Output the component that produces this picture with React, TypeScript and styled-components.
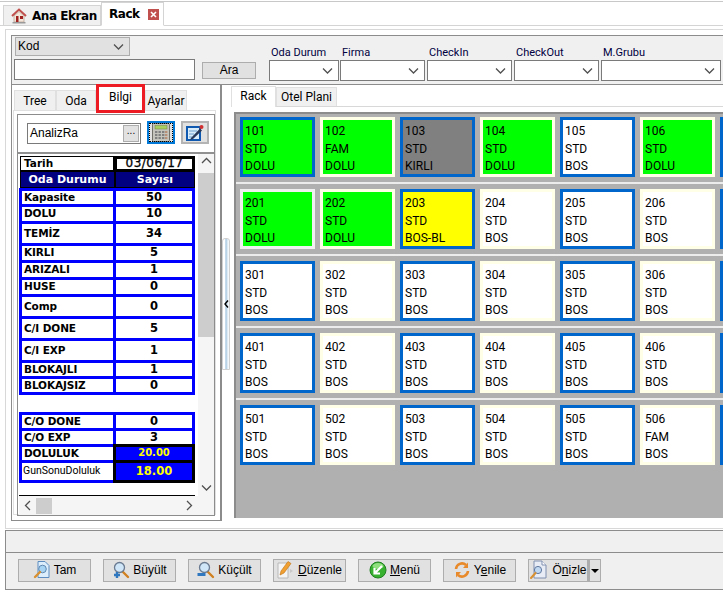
import React from "react"
import styled, { createGlobalStyle } from "styled-components"

const GlobalStyle = createGlobalStyle`
  html, body {
    margin: 0;
    padding: 0;
    width: 723px;
    height: 594px;
    overflow: hidden;
    background: #ffffff;
    font-family: "Liberation Sans", Arial, sans-serif;
    color: #000000;
  }
  * { box-sizing: border-box; }
`

const Page = styled.div`
  width: 723px;
  height: 594px;
  overflow: hidden;
  display: flex;
  flex-direction: column;
  padding-top: 1px;
`

const TopTabs = styled.div`
  height: 25px;
  flex: none;
  display: flex;
  align-items: flex-end;
  padding-left: 3px;
  border-top: 1px solid #c8c8c8;
  border-bottom: 1px solid #d4d4d4;
`

const TopTab = styled.div<{ $active?: boolean }>`
  height: ${(p) => (p.$active ? "24px" : "20px")};
  width: ${(p) => (p.$active ? "63px" : "98px")};
  display: flex;
  align-items: center;
  gap: 5px;
  padding-left: 7px;
  background: ${(p) => (p.$active ? "#ffffff" : "#f0f0f0")};
  border: 1px solid #d4d4d4;
  border-bottom: ${(p) => (p.$active ? "1px solid #ffffff" : "none")};
  margin-bottom: ${(p) => (p.$active ? "-1px" : "0")};
  font-family: "DejaVu Sans", sans-serif;
  font-weight: 700;
  font-size: 12px;
  letter-spacing: -0.45px;
`

const CloseBox = styled.span`
  width: 11px;
  height: 11px;
  background: #c0504d;
  margin-left: 3px;
  display: flex;
  align-items: center;
  justify-content: center;
`

const Workspace = styled.div`
  flex: none;
  margin: 3px 0 0 5px;
  height: 500px;
  border-top: 1px solid #d8d8d8;
  border-left: 1px solid #d8d8d8;
  border-bottom: 1px solid #d8d8d8;
  padding: 5px 0 0 5px;
  display: flex;
  flex-direction: column;
`

const SearchBar = styled.div`
  height: 50px;
  flex: none;
  background: #f0f0f0;
  border: 1px solid #8c8c8c;
  border-right: none;
  display: flex;
  padding: 1px 0 0 1px;
`

const SearchLeft = styled.div`
  width: 188px;
  flex: none;
  display: flex;
  flex-direction: column;
  gap: 3px;
`

const KodSelect = styled.div`
  width: 115px;
  height: 19px;
  margin-left: 2px;
  background: #e1e1e1;
  border: 1px solid #adadad;
  font-size: 12px;
  line-height: 17px;
  padding-left: 2px;
  display: flex;
  justify-content: space-between;
  align-items: center;
  padding-right: 5px;
`

const TextInput = styled.div`
  width: 181px;
  height: 21px;
  margin-left: 1px;
  background: #ffffff;
  border: 1px solid #7a7a7a;
`

const AraButton = styled.div`
  width: 54px;
  height: 17px;
  flex: none;
  margin: 25px 0 0 1px;
  background: #e1e1e1;
  border: 1px solid #adadad;
  font-size: 12px;
  line-height: 15px;
  text-align: center;
`

const Filters = styled.div`
  display: flex;
  flex: none;
  gap: 1px;
  margin-left: 13px;
  padding-top: 9px;
`

const Filter = styled.div<{ $w: number }>`
  width: ${(p) => p.$w}px;
  flex: none;
  margin-right: ${(p) => (p.$w === 85 ? 1 : 0)}px;
`

const FilterLabel = styled.div`
  height: 14px;
  font-family: Roboto, sans-serif;
  font-size: 11px;
  line-height: 14px;
  color: #000040;
  padding-left: 2px;
  white-space: nowrap;
`

const FilterBox = styled.div`
  height: 21px;
  background: #ffffff;
  border: 1px solid #7a7a7a;
  display: flex;
  justify-content: flex-end;
  align-items: center;
  padding-right: 5px;
`

const Body = styled.div`
  flex: 1;
  min-height: 0;
  display: flex;
`

const LeftPane = styled.div`
  width: 211px;
  flex: none;
  border: 1px solid #8c8c8c;
  border-top: none;
  border-right-width: 2px;
  height: 436px;
  padding: 4px 4px 5px 1px;
  display: flex;
  flex-direction: column;
`

const TabRow = styled.div`
  height: 21px;
  flex: none;
  display: flex;
  align-items: flex-end;
  padding-left: 1px;
`

const SmallTab = styled.div<{ $w: number }>`
  width: ${(p) => p.$w}px;
  height: 20px;
  background: #f0f0f0;
  border: 1px solid #e0e0e0;
  border-bottom: none;
  font-family: Roboto, sans-serif;
  font-size: 12px;
  line-height: 20px;
  text-align: center;
  white-space: nowrap;
`

const ActiveTab = styled.div`
  width: 49px;
  height: 29px;
  margin-bottom: -3px;
  background: #ffffff;
  border: 3px solid #ed1c24;
  font-family: Roboto, sans-serif;
  font-size: 12px;
  line-height: 20px;
  text-align: center;
  position: relative;
  z-index: 1;
`

const LeftContent = styled.div`
  flex: 1;
  min-height: 0;
  border: 1px solid #e0e0e0;
  padding: 3px 0 0 3px;
  display: flex;
`

const LeftInner = styled.div`
  width: 200px;
  height: 402px;
  border: 1px solid #8c8c8c;
  display: flex;
  flex-direction: column;
`

const ToolRow = styled.div`
  height: 39px;
  flex: none;
  border-bottom: 2px solid #909090;
  display: flex;
  align-items: flex-start;
  padding: 6px 0 0 9px;
`

const AnalizBox = styled.div`
  width: 114px;
  height: 21px;
  margin-top: 2px;
  background: #ffffff;
  border: 1px solid #7a7a7a;
  font-size: 12px;
  line-height: 19px;
  padding-left: 2px;
  display: flex;
  justify-content: space-between;
`

const DotsButton = styled.span`
  width: 16px;
  height: 17px;
  margin: 1px;
  background: #e1e1e1;
  border: 1px solid #adadad;
  font-size: 10px;
  line-height: 10px;
  text-align: center;
`

const IconButton = styled.div<{ $focus?: boolean }>`
  width: 28px;
  height: 23px;
  margin-left: 6px;
  background: #e1e1e1;
  border: ${(p) => (p.$focus ? "2px solid #0078d7" : "2px solid #b4b4b4")};
  outline: ${(p) => (p.$focus ? "1px dotted #000000" : "none")};
  outline-offset: -3px;
  display: flex;
  align-items: center;
  justify-content: center;
`

const ScrollArea = styled.div`
  flex: 1;
  min-height: 0;
  display: grid;
  grid-template-columns: 179px 16px;
  grid-template-rows: 342px 1fr;
  padding-left: 1px;
`

const Sheet = styled.div`
  overflow: hidden;
  padding-top: 2px;
`

const HeadRow = styled.div`
  display: flex;
  height: 15px;
`

const TarihLabel = styled.div`
  width: 94px;
  margin-left: 1px;
  border: 1px solid #000000;
  font-family: "DejaVu Sans", sans-serif;
  font-weight: 700;
  font-size: 10.5px;
  line-height: 13px;
  padding-left: 3px;
`

const TarihValue = styled.div`
  width: 81px;
  background: #ffffff;
  border: 3px solid #000000;
  border-bottom-width: 2px;
  font-family: "DejaVu Sans", sans-serif;
  -webkit-text-stroke: 0.3px #000000;
  font-size: 12px;
  letter-spacing: 0.5px;
  line-height: 9px;
  text-align: center;
  white-space: nowrap;
`

const TitleRow = styled.div`
  display: flex;
  height: 17px;
  background: #000080;
  color: #ffffff;
  font-family: "DejaVu Sans", sans-serif;
  font-weight: 700;
  font-size: 11px;
  line-height: 15px;
  margin-left: 1px;
  width: 175px;
  border: 1px solid #000000;
`

const TitleCell = styled.div<{ $w: number }>`
  width: ${(p) => p.$w}px;
  text-align: center;
  & + & {
    border-left: 2px solid #000000;
  }
`

const StatRow = styled.div<{ $h: number; $last?: boolean }>`
  height: ${(p) => p.$h}px;
  width: 176px;
  display: flex;
  border: 3px solid #0000ff;
  border-bottom: ${(p) => (p.$last ? "3px solid #0000ff" : "none")};
  background: #ffffff;
  font-family: "DejaVu Sans", sans-serif;
  font-weight: 700;
  font-size: 10.5px;
`

const StatLabel = styled.div`
  width: 91px;
  flex: none;
  padding: 0 0 2px 2px;
  display: flex;
  align-items: center;
  white-space: nowrap;
  letter-spacing: -0.1px;
`

const StatValue = styled.div`
  flex: 1;
  border-left: 3px solid #0000ff;
  padding-bottom: 2px;
  display: flex;
  align-items: center;
  justify-content: center;
  font-size: 11.5px;
`

const HotRow = styled.div<{ $h: number }>`
  height: ${(p) => p.$h}px;
  width: 176px;
  display: flex;
  font-family: "DejaVu Sans", sans-serif;
  font-weight: 700;
  font-size: 10.5px;
`

const HotLabel = styled.div<{ $plain?: boolean }>`
  width: 94px;
  flex: none;
  background: #ffffff;
  border-left: 3px solid #0000ff;
  border-top: 3px solid #0000ff;
  border-bottom: ${(p) => (p.$plain ? "3px solid #0000ff" : "none")};
  padding: 0 0 2px ${(p) => (p.$plain ? 1 : 2)}px;
  display: flex;
  align-items: center;
  white-space: nowrap;
  letter-spacing: -0.1px;
  ${(p) =>
    p.$plain &&
    `
    font-family: Roboto, sans-serif;
    font-weight: 400;
    font-size: 10.5px;
    letter-spacing: 0;
  `}
`

const HotValue = styled.div<{ $size: number; $last?: boolean }>`
  flex: 1;
  background: #0000ff;
  color: #ffff00;
  font-size: ${(p) => p.$size}px;
  border: 3px solid #000000;
  border-bottom: ${(p) => (p.$last ? "3px solid #000000" : "none")};
  padding-bottom: 2px;
  display: flex;
  align-items: center;
  justify-content: center;
`

const Gap = styled.div<{ $h: number }>`
  height: ${(p) => p.$h}px;
`

const BlackRule = styled.div`
  height: 2px;
  width: 176px;
  background: #000000;
  margin-top: 12px;
`

const VScroll = styled.div`
  background: #f5f5f5;
  display: flex;
  flex-direction: column;
  align-items: center;
  justify-content: space-between;
  padding: 3px 0 4px;
  position: relative;
`

const VThumb = styled.div`
  position: absolute;
  left: 0;
  right: 0;
  top: 19px;
  height: 164px;
  background: #cdcdcd;
`

const HScroll = styled.div`
  grid-column: 1 / span 2;
  display: flex;
  align-items: center;
  justify-content: space-between;
  padding: 0 21px 0 5px;
  background: #f5f5f5;
`

const HThumb = styled.div`
  width: 16px;
  height: 16px;
  margin-left: 4px;
  margin-right: auto;
  background: #cdcdcd;
`

const Splitter = styled.div`
  width: 9px;
  flex: none;
  padding-top: 153px;
`

const SplitHandle = styled.div`
  width: 8px;
  height: 132px;
  border: 1px solid #d0d0d0;
  border-radius: 3px 3px 0 0;
  background: linear-gradient(90deg, #ffffff 0 25%, #a8c8e0 50%, #ddeaf4 75%, #ffffff 100%);
  display: flex;
  align-items: center;
  justify-content: center;
`

const RightPane = styled.div`
  flex: 1;
  min-width: 0;
  height: 433px;
  display: flex;
  flex-direction: column;
  overflow: hidden;
`

const RightTabs = styled.div`
  height: 22px;
  flex: none;
  display: flex;
  align-items: flex-end;
  border-bottom: 1px solid #d8d8d8;
`

const RightTab = styled.div<{ $active?: boolean }>`
  width: ${(p) => (p.$active ? 45 : 61)}px;
  height: ${(p) => (p.$active ? 21 : 19)}px;
  margin-bottom: ${(p) => (p.$active ? -1 : 0)}px;
  background: ${(p) => (p.$active ? "#ffffff" : "#f0f0f0")};
  border: 1px solid #e0e0e0;
  border-bottom: none;
  font-family: Roboto, sans-serif;
  font-size: 12px;
  line-height: 18px;
  text-align: center;
  white-space: nowrap;
`

const RackArea = styled.div`
  flex: none;
  height: 406px;
  margin: 5px 0 0 3px;
  background: #b0b0b0;
  border-top: 2px solid #8c8c8c;
  border-left: 2px solid #8c8c8c;
  overflow: hidden;
  width: 600px;
`

const RackRow = styled.div`
  display: flex;
  gap: 5px;
  padding: 3px 0 5px 4px;
  height: 68px;
  & + & {
    height: 72px;
    padding-top: 5px;
    border-top: 2px solid #ececec;
  }
`

const Card = styled.div<{ $tone: "blue" | "ivory" | "pale"; $fill: string }>`
  width: 75px;
  height: 60px;
  flex: none;
  background: ${(p) => p.$fill};
  border: 3px solid
    ${(p) => (p.$tone === "blue" ? "#0066cc" : p.$tone === "ivory" ? "#ffffe8" : "#f0f0f0")};
  padding: 3px 0 0 2px;
  font-family: Roboto, sans-serif;
  font-size: 12px;
  line-height: 17.5px;
  color: #000000;
`

const Status = styled.div`
  height: 23px;
  flex: none;
  margin: 1px 0 0 5px;
  background: #f0f0f0;
  border: 1px solid #8c8c8c;
  border-right: none;
`

const Footer = styled.div`
  height: 37px;
  flex: none;
  margin-left: 5px;
  background: #f0f0f0;
  border-left: 1px solid #8c8c8c;
  border-bottom: 1px solid #8c8c8c;
  display: flex;
  gap: 12px;
  padding: 6px 0 0 12px;
`

const FootButton = styled.div<{ $split?: boolean }>`
  width: ${(p) => (p.$split ? 60 : 73)}px;
  height: 23px;
  padding-bottom: 1px;
  background: #e1e1e1;
  border: 1px solid #adadad;
  display: flex;
  align-items: center;
  justify-content: center;
  gap: 3px;
  font-size: 12px;
  white-space: nowrap;
  & u {
    text-underline-offset: 1px;
  }
`

const SplitGroup = styled.div`
  display: flex;
`

const SplitArrow = styled.div`
  width: 13px;
  height: 23px;
  background: #e1e1e1;
  border: 1px solid #adadad;
  border-left: 2px solid #adadad;
  display: flex;
  align-items: center;
  justify-content: center;
`

const Caret = styled.span`
  width: 0;
  height: 0;
  border-left: 4px solid transparent;
  border-right: 4px solid transparent;
  border-top: 4px solid #000000;
`

const Chevron = ({ dir = "down" }: { dir?: "down" | "up" | "left" | "right" }) => {
  const paths = {
    down: "M1 1.5 L5.5 6 L10 1.5",
    up: "M1 6 L5.5 1.5 L10 6",
    left: "M6 1 L1.5 5.5 L6 10",
    right: "M2 1 L6.5 5.5 L2 10",
  }
  const wide = dir === "down" || dir === "up"
  return (
    <svg width={wide ? 11 : 8} height={wide ? 8 : 11} style={{ flex: "none" }}>
      <path d={paths[dir]} fill="none" stroke="#505050" strokeWidth="1.3" />
    </svg>
  )
}

const HomeIcon = () => (
  <svg width="16" height="16" viewBox="0 0 16 16">
    <path d="M1 8 L8 1.5 L15 8" fill="none" stroke="#c0504d" strokeWidth="2" />
    <path d="M3 8 L8 3.5 L13 8 V14 H3 Z" fill="#f3e6da" stroke="#b09080" strokeWidth="0.6" />
    <rect x="5" y="8" width="2.5" height="6" fill="#a02020" />
    <rect x="9" y="8" width="3" height="3" fill="#a02020" />
    <rect x="1.5" y="14" width="13" height="1.5" fill="#9a9a9a" />
  </svg>
)

const CloseIcon = () => (
  <svg width="7" height="7" viewBox="0 0 7 7">
    <path d="M1 1 L6 6 M6 1 L1 6" stroke="#ffffff" strokeWidth="1.6" />
  </svg>
)

const CalcIcon = () => (
  <svg width="18" height="19" viewBox="0 0 18 19">
    <rect x="0.5" y="0.5" width="17" height="18" rx="1" fill="#c4c4bc" stroke="#707068" />
    <rect x="3" y="2.5" width="12" height="3.5" fill="#a8d060" stroke="#708040" strokeWidth="0.5" />
    {[8, 11, 14].map((y) =>
      [3, 6.5, 10, 13].map((x) => (
        <rect key={`${x}-${y}`} x={x} y={y} width="2.4" height="2" fill={x === 13 ? "#b89078" : "#808080"} />
      )),
    )}
  </svg>
)

const EditIcon = () => (
  <svg width="18" height="18" viewBox="0 0 18 18">
    <rect x="1" y="3" width="13" height="13" fill="#d8ecfa" stroke="#0f5ab0" strokeWidth="2" />
    <path d="M3 7 H11 M3 10 H8 M3 13 H6" stroke="#70a0d0" strokeWidth="1" />
    <path d="M5 14 L14 4.5 L16 6.5 L7 15 L4 16 Z" fill="#283858" />
    <circle cx="15.5" cy="3" r="2" fill="#d03030" />
  </svg>
)

const Lens = ({ badge }: { badge?: "plus" | "minus" }) => (
  <svg width="18" height="18" viewBox="0 0 18 18">
    <path d="M10 10 L16 16" stroke="#d08020" strokeWidth="2.4" strokeLinecap="round" />
    <circle cx="7.5" cy="6.5" r="5" fill="#cfe6f8" stroke="#6a7a90" strokeWidth="1.3" />
    {badge === "plus" && <path d="M2 14 H8 M5 11 V17" stroke="#2f78c0" strokeWidth="2.4" />}
    {badge === "minus" && <rect x="0.5" y="12" width="8" height="3" fill="#2f78c0" />}
  </svg>
)

const PageIcon = () => (
  <svg width="18" height="18" viewBox="0 0 18 18">
    <path d="M5 0.5 H12 L16 4.5 V16.5 H5 Z" fill="#dceefc" stroke="#5c8cc0" />
    <circle cx="9.5" cy="8" r="3.8" fill="#a8d4f4" stroke="#6088b0" />
    <path d="M7 11 L2 16" stroke="#d89030" strokeWidth="2.4" strokeLinecap="round" />
  </svg>
)

const PencilIcon = () => (
  <svg width="18" height="20" viewBox="0 0 18 20">
    <path d="M1 3 H11 V18 H1 Z" fill="#f4f4f4" stroke="#b8b8b8" />
    <path d="M3 15 L4 11 L11 1.5 L14 3.5 L7 13 Z" fill="#f0a030" stroke="#c07010" strokeWidth="0.6" />
    <path d="M13 9 L16 11 L13 13 Z" fill="#c8c8c8" />
  </svg>
)

const MenuIcon = () => (
  <svg width="18" height="18" viewBox="0 0 18 18">
    <circle cx="9" cy="9" r="8" fill="#38b030" stroke="#208020" />
    <ellipse cx="9" cy="5" rx="5.5" ry="3" fill="#90e080" />
    <path d="M13 5 L6 12 M5.5 7 V12.5 H11" fill="none" stroke="#ffffff" strokeWidth="2.2" />
  </svg>
)

const RefreshIcon = () => (
  <svg width="18" height="18" viewBox="0 0 18 18">
    <path d="M3 8 A6 6 0 0 1 13 4" fill="none" stroke="#e88a2a" strokeWidth="2.6" />
    <path d="M15 1.5 V7 H10 Z" fill="#e88a2a" />
    <path d="M15 10 A6 6 0 0 1 5 14" fill="none" stroke="#e88a2a" strokeWidth="2.6" />
    <path d="M3 16.5 V11 H8 Z" fill="#e88a2a" />
  </svg>
)

const PreviewIcon = () => (
  <svg width="20" height="20" viewBox="0 0 20 20">
    <path d="M5 1 H13 L17 5 V18 H5 Z" fill="#e8ecf4" stroke="#8090b0" />
    <path d="M13 1 V5 H17" fill="#ffffff" stroke="#8090b0" />
    <circle cx="9" cy="10" r="3.6" fill="#c0d8f0" stroke="#6078a0" />
    <path d="M6.5 13 L2 18" stroke="#d89030" strokeWidth="2" strokeLinecap="round" />
  </svg>
)

type Tone = "blue" | "ivory" | "pale"
type Room = { no: string; kind: string; state: string; tone: Tone; fill: string }

const GREEN = "#00ff00"

const room = (no: number, tone: Tone, state = "BOS", fill = "#ffffff", kind = "STD"): Room => ({
  no: String(no),
  kind,
  state,
  tone,
  fill,
})

const plainFloor = (f: number, last: string = "STD"): Room[] => [
  room(f * 100 + 1, "blue"),
  room(f * 100 + 2, "ivory"),
  room(f * 100 + 3, "blue"),
  room(f * 100 + 4, "ivory"),
  room(f * 100 + 5, "blue"),
  room(f * 100 + 6, "ivory", "BOS", "#ffffff", last),
]

const floors: Room[][] = [
  [
    room(101, "blue", "DOLU", GREEN),
    room(102, "ivory", "DOLU", GREEN, "FAM"),
    room(103, "blue", "KIRLI", "#808080"),
    room(104, "ivory", "DOLU", GREEN),
    room(105, "blue"),
    room(106, "ivory", "DOLU", GREEN),
  ],
  [
    room(201, "pale", "DOLU", GREEN),
    room(202, "ivory", "DOLU", GREEN),
    room(203, "blue", "BOS-BL", "#ffff00"),
    room(204, "ivory"),
    room(205, "blue"),
    room(206, "ivory"),
  ],
  plainFloor(3),
  plainFloor(4),
  plainFloor(5, "FAM"),
]

const stats: { label: string; value: string; h: number }[] = [
  { label: "Kapasite", value: "50", h: 16 },
  { label: "DOLU", value: "10", h: 17 },
  { label: "TEMİZ", value: "34", h: 22 },
  { label: "KIRLI", value: "5", h: 17 },
  { label: "ARIZALI", value: "1", h: 17 },
  { label: "HUSE", value: "0", h: 17 },
  { label: "Comp", value: "0", h: 22 },
  { label: "C/I DONE", value: "5", h: 22 },
  { label: "C/I EXP", value: "1", h: 22 },
  { label: "BLOKAJLI", value: "1", h: 16 },
]

const filters = [
  { label: "Oda Durum", w: 70 },
  { label: "Firma", w: 85 },
  { label: "CheckIn", w: 85 },
  { label: "CheckOut", w: 85 },
  { label: "M.Grubu", w: 120 },
]

export default function App() {
  return (
    <Page>
      <GlobalStyle />
      <TopTabs>
        <TopTab>
          <HomeIcon />
          Ana Ekran
        </TopTab>
        <TopTab $active>
          Rack
          <CloseBox>
            <CloseIcon />
          </CloseBox>
        </TopTab>
      </TopTabs>

      <Workspace>
        <SearchBar>
          <SearchLeft>
            <KodSelect>
              Kod
              <Chevron />
            </KodSelect>
            <TextInput />
          </SearchLeft>
          <AraButton>Ara</AraButton>
          <Filters>
            {filters.map((f) => (
              <Filter key={f.label} $w={f.w}>
                <FilterLabel>{f.label}</FilterLabel>
                <FilterBox>
                  <Chevron />
                </FilterBox>
              </Filter>
            ))}
          </Filters>
        </SearchBar>

        <Body>
          <LeftPane>
            <TabRow>
              <SmallTab $w={42}>Tree</SmallTab>
              <SmallTab $w={40}>Oda</SmallTab>
              <ActiveTab>Bilgi</ActiveTab>
              <SmallTab $w={42}>Ayarlar</SmallTab>
            </TabRow>
            <LeftContent>
              <LeftInner>
                <ToolRow>
                  <AnalizBox>
                    AnalizRa
                    <DotsButton>...</DotsButton>
                  </AnalizBox>
                  <IconButton $focus>
                    <CalcIcon />
                  </IconButton>
                  <IconButton>
                    <EditIcon />
                  </IconButton>
                </ToolRow>
                <ScrollArea>
                  <Sheet>
                    <HeadRow>
                      <TarihLabel>Tarih</TarihLabel>
                      <TarihValue>03/06/17</TarihValue>
                    </HeadRow>
                    <TitleRow>
                      <TitleCell $w={93}>Oda Durumu</TitleCell>
                      <TitleCell $w={80}>Sayısı</TitleCell>
                    </TitleRow>
                    {stats.map((s) => (
                      <StatRow key={s.label} $h={s.h}>
                        <StatLabel>{s.label}</StatLabel>
                        <StatValue>{s.value}</StatValue>
                      </StatRow>
                    ))}
                    <StatRow $h={19} $last>
                      <StatLabel>BLOKAJSIZ</StatLabel>
                      <StatValue>0</StatValue>
                    </StatRow>
                    <Gap $h={17} />
                    <StatRow $h={16}>
                      <StatLabel>C/O DONE</StatLabel>
                      <StatValue>0</StatValue>
                    </StatRow>
                    <StatRow $h={16}>
                      <StatLabel>C/O EXP</StatLabel>
                      <StatValue>3</StatValue>
                    </StatRow>
                    <HotRow $h={16}>
                      <HotLabel>DOLULUK</HotLabel>
                      <HotValue $size={10}>20.00</HotValue>
                    </HotRow>
                    <HotRow $h={23}>
                      <HotLabel $plain>GunSonuDoluluk</HotLabel>
                      <HotValue $size={11.5} $last>
                        18.00
                      </HotValue>
                    </HotRow>
                    <BlackRule />
                  </Sheet>
                  <VScroll>
                    <VThumb />
                    <Chevron dir="up" />
                    <Chevron dir="down" />
                  </VScroll>
                  <HScroll>
                    <Chevron dir="left" />
                    <HThumb />
                    <Chevron dir="right" />
                  </HScroll>
                </ScrollArea>
              </LeftInner>
            </LeftContent>
          </LeftPane>

          <Splitter>
            <SplitHandle>
              <svg width="5" height="8">
                <path d="M4 0.5 L1 4 L4 7.5" fill="none" stroke="#000000" strokeWidth="1.4" />
              </svg>
            </SplitHandle>
          </Splitter>

          <RightPane>
            <RightTabs>
              <RightTab $active>Rack</RightTab>
              <RightTab>Otel Plani</RightTab>
            </RightTabs>
            <RackArea>
              {floors.map((floor) => (
                <RackRow key={floor[0].no}>
                  {floor.map((r) => (
                    <Card key={r.no} $tone={r.tone} $fill={r.fill}>
                      {r.no}
                      <br />
                      {r.kind}
                      <br />
                      {r.state}
                    </Card>
                  ))}
                  <Card $tone="blue" $fill="#ffffff" />
                </RackRow>
              ))}
            </RackArea>
          </RightPane>
        </Body>
      </Workspace>

      <Status />
      <Footer>
        <FootButton>
          <PageIcon />
          Tam
        </FootButton>
        <FootButton>
          <Lens badge="plus" />
          Büyült
        </FootButton>
        <FootButton>
          <Lens badge="minus" />
          Küçült
        </FootButton>
        <FootButton>
          <PencilIcon />
          <span>
            <u>D</u>üzenle
          </span>
        </FootButton>
        <FootButton>
          <MenuIcon />
          <span>
            <u>M</u>enü
          </span>
        </FootButton>
        <FootButton>
          <RefreshIcon />
          <span>
            Y<u>e</u>nile
          </span>
        </FootButton>
        <SplitGroup>
          <FootButton $split>
            <PreviewIcon />
            <span>
              Ö<u>n</u>izle
            </span>
          </FootButton>
          <SplitArrow>
            <Caret />
          </SplitArrow>
        </SplitGroup>
      </Footer>
    </Page>
  )
}
